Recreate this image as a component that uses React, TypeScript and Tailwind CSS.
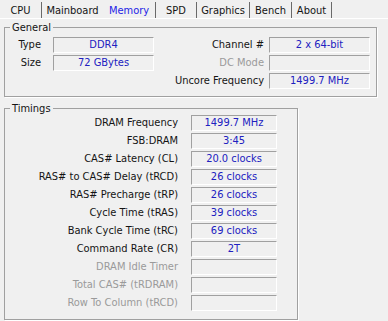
import React from "react";

const tabs: { name: string; w: string; border: boolean; active?: boolean }[] = [
  { name: "CPU", w: "w-[42px]", border: true },
  { name: "Mainboard", w: "w-[61px]", border: false },
  { name: "Memory", w: "w-[53px]", border: true, active: true },
  { name: "SPD", w: "w-[41px]", border: true },
  { name: "Graphics", w: "w-[53px]", border: true },
  { name: "Bench", w: "w-[42px]", border: true },
  { name: "About", w: "w-[40px]", border: true },
];

function Field({ value, w }: { value?: string; w: string }) {
  return (
    <div
      className={`${w} h-[16px] border border-t-[#a0a0a0] border-l-[#a0a0a0] border-b-white border-r-white text-center leading-[14px] text-[#2020c0] whitespace-nowrap`}
    >
      {value ?? ""}
    </div>
  );
}

const timings: { label: string; value?: string; disabled?: boolean }[] = [
  { label: "DRAM Frequency", value: "1499.7 MHz" },
  { label: "FSB:DRAM", value: "3:45" },
  { label: "CAS# Latency (CL)", value: "20.0 clocks" },
  { label: "RAS# to CAS# Delay (tRCD)", value: "26 clocks" },
  { label: "RAS# Precharge (tRP)", value: "26 clocks" },
  { label: "Cycle Time (tRAS)", value: "39 clocks" },
  { label: "Bank Cycle Time (tRC)", value: "69 clocks" },
  { label: "Command Rate (CR)", value: "2T" },
  { label: "DRAM Idle Timer", disabled: true },
  { label: "Total CAS# (tRDRAM)", disabled: true },
  { label: "Row To Column (tRCD)", disabled: true },
];

export default function App() {
  return (
    <div className="w-[388px] h-[321px] overflow-hidden bg-[#f0f0f0] text-[11px] text-[#141414] font-['DejaVu_Sans_Condensed','Liberation_Sans',sans-serif]">
      {/* Tab strip */}
      <div className="h-[19px] flex border-b border-b-white">
        {tabs.map((t) => (
          <div
            key={t.name}
            className={`${t.w} mt-[2px] h-[16px] pt-[1px] leading-[16px] text-center whitespace-nowrap ${
              t.border ? "border-r border-r-[#6a6a6a]" : ""
            } ${t.active ? "text-[#1e1ee6]" : ""}`}
          >
            {t.name}
          </div>
        ))}
      </div>

      <div className="pl-[4px]">
        {/* General */}
        <fieldset className="mt-[2px] w-[373px] border border-[#a0a0a0] shadow-[1px_1px_0_#fff]">
          <legend className="ml-[5px] px-[2px] leading-[13px]">General</legend>
          <div className="pt-[3px] pb-[7px] pr-[6px] grid grid-cols-[36px_113px_1fr_101px] grid-rows-[16px_16px_16px] gap-y-[2px] leading-[16px]">
            <div className="text-right">Type</div>
            <div className="pl-[12px]">
              <Field value="DDR4" w="w-[101px]" />
            </div>
            <div className="text-right pr-[5px]">Channel #</div>
            <Field value="2 x 64-bit" w="w-[101px]" />

            <div className="text-right">Size</div>
            <div className="pl-[12px]">
              <Field value="72 GBytes" w="w-[101px]" />
            </div>
            <div className="text-right pr-[5px] text-[#9a9a9a]">DC Mode</div>
            <Field w="w-[101px]" />

            <div />
            <div />
            <div className="text-right pr-[5px] whitespace-nowrap">Uncore Frequency</div>
            <Field value="1499.7 MHz" w="w-[101px]" />
          </div>
        </fieldset>

        {/* Timings */}
        <fieldset className="mt-[5px] w-[294px] border border-[#a0a0a0] shadow-[1px_1px_0_#fff]">
          <legend className="ml-[5px] px-[2px] leading-[13px]">Timings</legend>
          <div className="pb-[8px] grid grid-cols-[173px_86px] gap-x-[13px] gap-y-[2px] auto-rows-[16px] leading-[16px]">
            {timings.map((r) => (
              <React.Fragment key={r.label}>
                <div className={`text-right whitespace-nowrap ${r.disabled ? "text-[#9a9a9a]" : ""}`}>
                  {r.label}
                </div>
                <Field value={r.value} w="w-[86px]" />
              </React.Fragment>
            ))}
          </div>
        </fieldset>
      </div>
    </div>
  );
}
